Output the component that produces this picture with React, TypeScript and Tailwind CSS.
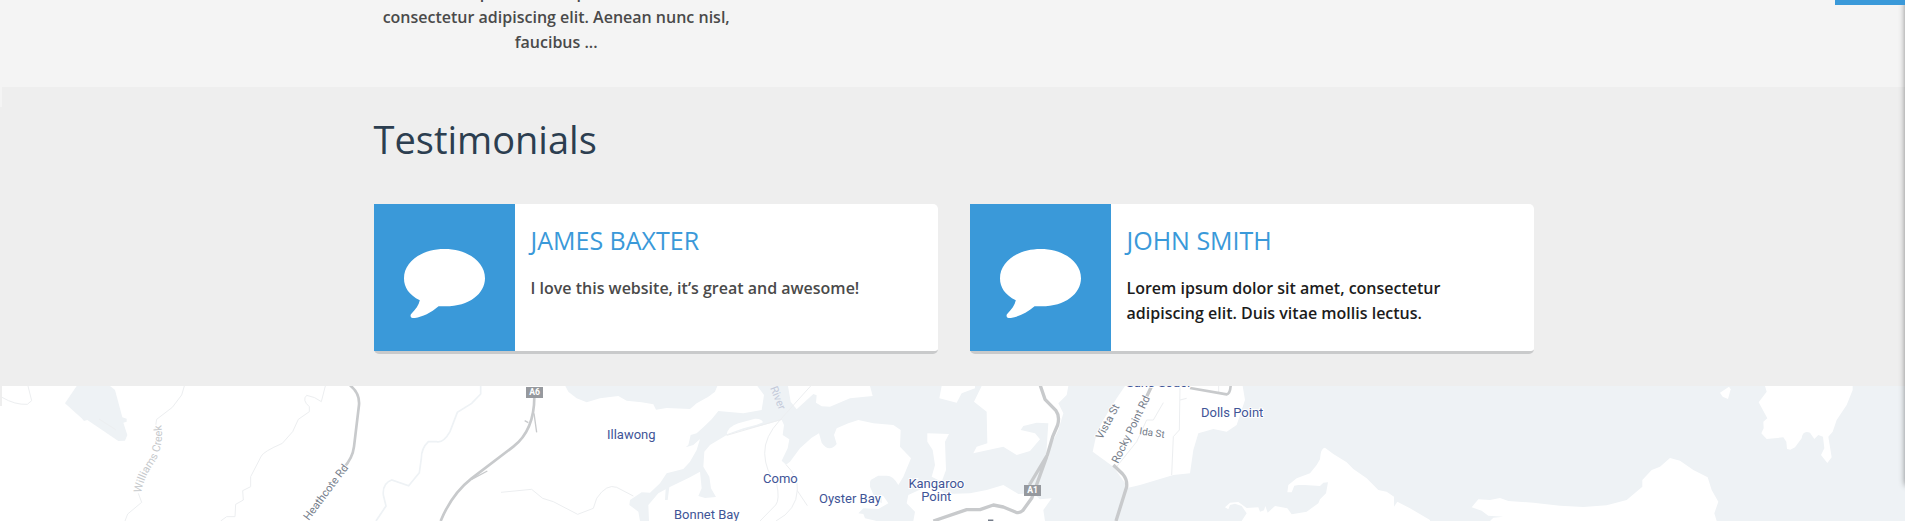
import type { ReactNode } from "react";

const testimonials = [
  {
    name: "James Baxter",
    quote: "I love this website, it’s great and awesome!",
    tone: "text-[#4a4a4a]",
  },
  {
    name: "John Smith",
    quote: "Lorem ipsum dolor sit amet, consectetur adipiscing elit. Duis vitae mollis lectus.",
    tone: "text-[#1c1c1c]",
  },
];

function Container({ children }: Readonly<{ children: ReactNode }>) {
  return <div className="mx-auto w-full max-w-[1160px]">{children}</div>;
}

function SpeechBubble() {
  return (
    <svg viewBox="0 0 82 70" className="w-[81px]" fill="white" aria-hidden="true">
      <path d="M41 0C64 0 82 13 82 29.500C82 45 66 58 42 58H35C27 65 18 69 10 70C7 70 6 68 7 66C12 61 15 57 16 52C5 46 0 39 0 29.500C0 13 18 0 41 0Z" />
    </svg>
  );
}

function TestimonialCard({
  name,
  quote,
  tone,
}: Readonly<{ name: string; quote: string; tone: string }>) {
  return (
    <article className="flex min-h-[150px] rounded-[5px] border-b-3 border-[#c9cacb] bg-white">
      <div className="flex w-[141px] shrink-0 items-center justify-center bg-[#3a99d9] pt-3">
        <SpeechBubble />
      </div>
      <div className="px-4 pt-[18px]">
        <h3 className="text-[25px] leading-9 text-[#3a99d9] uppercase">{name}</h3>
        <p className={`mt-[18px] max-w-[350px] leading-[25px] font-semibold ${tone}`}>{quote}</p>
      </div>
    </article>
  );
}

function RoadBadge({ x, y, label }: Readonly<{ x: number; y: number; label: string }>) {
  return (
    <g>
      <rect x={x} y={y} width="51" height="33" fill="#96999e" />
      <text x={x + 26} y={y + 25} fill="white" fontSize="26" fontWeight="700" textAnchor="middle">
        {label}
      </text>
    </g>
  );
}

// Map units are a third of a pixel.
function AreaMap() {
  return (
    <svg
      viewBox="6 48 5709 405"
      preserveAspectRatio="xMidYMid slice"
      className="block h-[135px] w-full bg-white"
      fontFamily="Roboto, sans-serif"
      role="img"
      aria-label="Map of the area"
    >
      <g fill="#eef2f5">
        <path d="M230 48L195 100L245 145L252 153L262 150L355 213L375 212L382 195L370 158L380 155V146L367 142L345 60L330 48Z" />
        <path d="M1696 48L1705 65L1730 85L1760 97L1800 85L1855 78L1880 92L1925 97L1960 103L1968 119L2000 114L2070 117L2090 100L2125 80L2145 65L2152 48Z" />
        <path d="M2272 48L2292 75L2285 120L2230 130L2155 123L2135 148L2110 172L2090 190L2072 195L2065 225L2057 232L2080 225L2100 207L2090 240L2070 275L2050 297L2000 310L1980 340L1950 368L1925 367L1890 390L1888 405L1915 425L1920 453H1947L1945 405L1975 370L1997 358L1995 390H2003L2008 352L2070 322L2100 305L2105 355L2095 378L2115 384L2148 381L2133 355L2128 320L2110 290L2113 245L2130 225L2180 195L2230 180L2300 163L2345 150L2352 165L2348 195L2368 208L2363 235L2345 272L2358 284L2370 275L2400 235L2435 203L2457 190L2465 218Q2487 250 2510 222L2502 195L2510 175L2545 160L2575 150L2620 160L2680 165L2702 180L2700 230L2733 265L2710 320L2695 345Q2680 317 2660 317H2635L2612 330L2610 345L2635 365L2625 380L2650 378L2665 400L2635 417L2590 415L2575 430L2590 432L2595 445L2630 453H2740L2745 425L2720 400L2725 375L2790 345L2840 372L2910 370L2960 360L3010 345L3055 372L3100 370L3120 388L3155 385L3130 420L3135 453H5715V48Z" />
        <path d="M2610 335L2630 320L2645 322V400L2625 385L2610 350Z" />
      </g>
      <g fill="white">
        <path d="M2364 48L2372 95L2390 118L2440 72L2450 76L2448 98L2465 109L2490 110L2550 85L2618 78L2610 48Z" />
        <path d="M2180 193Q2184 170 2215 160L2265 146Q2285 145 2289 157L2270 164L2230 175Z" />
        <path d="M2825 48L2818 85L2870 98L2885 70L2925 55V48Z" />
        <path d="M2945 48L2922 95L2960 125L2962 220L2930 230L2920 250L2975 238L3010 230L3050 255L3090 243L3120 208L3105 190L3062 180L3070 168L3110 158L3145 160L3138 262H3147L3150 230L3175 180L3190 130L3175 100L3200 75L3205 48Z" />
        <path d="M2782 190L2847 192L2835 215L2838 300L2825 335L2795 320L2805 285L2798 240L2782 215Z" />
        <path d="M3375 48L3350 85L3310 150L3290 190L3278 245L3305 265L3340 290L3385 353L3420 345L3520 315L3570 310L3580 240L3595 190L3640 177L3680 185L3710 165L3725 120L3735 90L3728 48Z" />
        <path d="M3725 453L3740 430L3725 408L3705 401L3690 405L3685 418L3675 412L3690 398L3715 396L3740 414L3775 412L3780 425L3792 421L3796 408L3803 428L3825 408L3862 415L3875 433L3920 425L3955 400L3960 388L3978 370L3984 337L3970 338L3960 348L3915 345H3895L3883 347L3875 367H3862L3865 345L3890 325L3930 310L3950 285L3960 268Q3962 233 3975 233L4000 252L4040 277L4060 297L4100 325L4135 360L4160 365L4182 380V410L4192 395L4230 415L4290 450V453Z" />
        <path d="M4415 412L4435 388L4470 390L4500 384L4525 393L4600 398L4680 407L4750 411L4820 406L4880 390L4927 350V330L4955 300L4980 290L5010 264L5040 272L5080 300L5123 322L5135 360L5155 395L5143 430L5150 453H4470L4480 443L4510 440L4465 437L4445 422Z" />
        <path d="M5295 48L5300 65L5276 97L5302 145L5290 155L5291 175L5284 190L5300 207L5350 202L5359 215L5361 237L5371 239L5385 232L5405 205Q5408 180 5430 188L5443 207L5455 195L5469 200L5473 235L5463 255L5482 279L5495 262L5485 200L5498 185L5510 150L5540 105L5558 60V48Z" />
        <path d="M5160 68L5187 50L5192 58L5184 87L5168 80Z" />
      </g>
      <g fill="none" stroke="#eceef0" strokeWidth="3">
        <path d="M6 82Q45 105 82 103L95 92L84 48M553 48L545 75L517 112L470 148L465 180M415 370L425 397L383 432L375 453M976 48L964 95Q945 80 920 76Q905 90 928 110V125L895 148L878 185L847 220Q790 245 784 258L752 320V350L728 362L730 390L707 403L705 440H680L662 453M297 147L347 179" />
        <path d="M1503 367L1595 358L1628 385L1660 395L1733 433L1780 415L1790 385Q1820 340 1850 352L1900 378" />
        <path d="M2432 48L2340 150Q2293 200 2294 250Q2296 305 2330 340Q2340 390 2327 405L2280 453M2358 284Q2395 320 2392 360Q2390 420 2328 453M2392 362L2422 407M2180 196L2345 148" />
        <path d="M3540 50L3538 180L3520 200L3515 315M3490 98L3460 150H3440L3410 215L3350 290M3540 90L3560 85M3656 48V70" />
      </g>
      <path d="M1442 48V72L1415 100L1372 127L1350 185Q1330 220 1310 215H1285Q1264 235 1264 265L1258 308L1226 347L1175 330Q1147 340 1150 375L1158 408L1128 453" fill="none" stroke="#eef2f5" strokeWidth="5" />
      <g fill="none" stroke="#c8cacc" strokeWidth="8" strokeLinejoin="round">
        <path d="M1050 46Q1080 70 1077 105L1062 230Q1058 265 1030 295" />
        <path d="M1603 80Q1603 180 1540 230L1415 325Q1355 372 1322 453" />
        <path d="M3120 44L3135 88L3168 122Q3180 138 3173 165L3158 200L3142 255L3088 345M3142 255L3095 385L3068 422Q3060 430 3048 427L3010 411L2980 405L2940 419H2900L2800 453" strokeWidth="10" />
        <path d="M3455 48L3440 80M3340 285L3368 312Q3382 328 3380 350L3348 453" strokeWidth="10" />
        <path d="M3570 54L3680 73Q3690 72 3692 48" />
        <path d="M1602 130L1610 187M1574 152L1585 158M1415 328L1462 303" strokeWidth="4" />
      </g>
      <RoadBadge x={1578} y={51} label="A6" />
      <RoadBadge x={3072} y={345} label="A1" />
      <g fill="#3f5597" stroke="white" strokeWidth="6" paintOrder="stroke" fontSize="39">
        <text x="1821" y="206">Illawong</text>
        <text x="2289" y="339">Como</text>
        <text x="2022" y="446">Bonnet Bay</text>
        <text x="2457" y="398">Oyster Bay</text>
        <text x="2809" y="354" textAnchor="middle">
          <tspan x="2809">Kangaroo</tspan>
          <tspan x="2809" dy="39">Point</tspan>
        </text>
        <text x="3603" y="140">Dolls Point</text>
        <text x="3378" y="52">Sans Souci</text>
      </g>
      <g fill="#747c89" stroke="white" strokeWidth="5" paintOrder="stroke" fontSize="33">
        <text transform="translate(926 453) rotate(-53)">Heathcote Rd</text>
        <text transform="translate(3306 210) rotate(-62)">Vista St</text>
        <text transform="translate(3354 282) rotate(-64)">Rocky Point Rd</text>
        <text transform="translate(3417 193) rotate(8)" fontSize="30">Ida St</text>
        <text transform="translate(2310 54) rotate(68)" fill="#c4cada" stroke="none">River</text>
        <path id="creek" d="M424 370Q430 325 462 280Q492 230 484 165" fill="none" stroke="none" />
        <text fill="#c6c9cc" fontSize="33">
          <textPath href="#creek">Williams Creek</textPath>
        </text>
      </g>
      <path d="M2964 451H2980" stroke="#747c89" strokeWidth="5" />
    </svg>
  );
}

export default function App() {
  return (
    <div className="relative flex overflow-hidden bg-white font-['Open_Sans',sans-serif] text-base">
      <div className="w-[2px] shrink-0">
        <div className="h-[107px] bg-[#f4f4f4]" />
        <div className="h-[299px] bg-[#eee]" />
      </div>

      <main className="min-w-0 flex-1">
        <section className="bg-[#f4f4f4] pb-8">
          <Container>
            <div className="grid grid-cols-3 gap-8">
              <p className="-mt-5 text-center leading-[25px] font-semibold text-[#4a4a4a]">
                Lorem ipsum dolor ipsum sit amet,
                <br />
                consectetur adipiscing elit. Aenean nunc nisl, faucibus ...
              </p>
            </div>
          </Container>
        </section>

        <section className="bg-[#eee] pt-6 pb-8">
          <Container>
            <h2 className="text-[38px] leading-[56px] text-[#2c3e50]">Testimonials</h2>
            <div className="mt-[37px] grid grid-cols-2 gap-8">
              {testimonials.map((item) => (
                <TestimonialCard key={item.name} {...item} />
              ))}
            </div>
          </Container>
        </section>

        <AreaMap />
      </main>

      <div className="absolute top-0 left-full h-[485px] w-20 shadow-[0_0_6px_rgba(0,0,0,0.45)]" />
      <div className="absolute top-0 right-0 h-[5px] w-[70px] bg-[#3a99d9]" />
    </div>
  );
}
